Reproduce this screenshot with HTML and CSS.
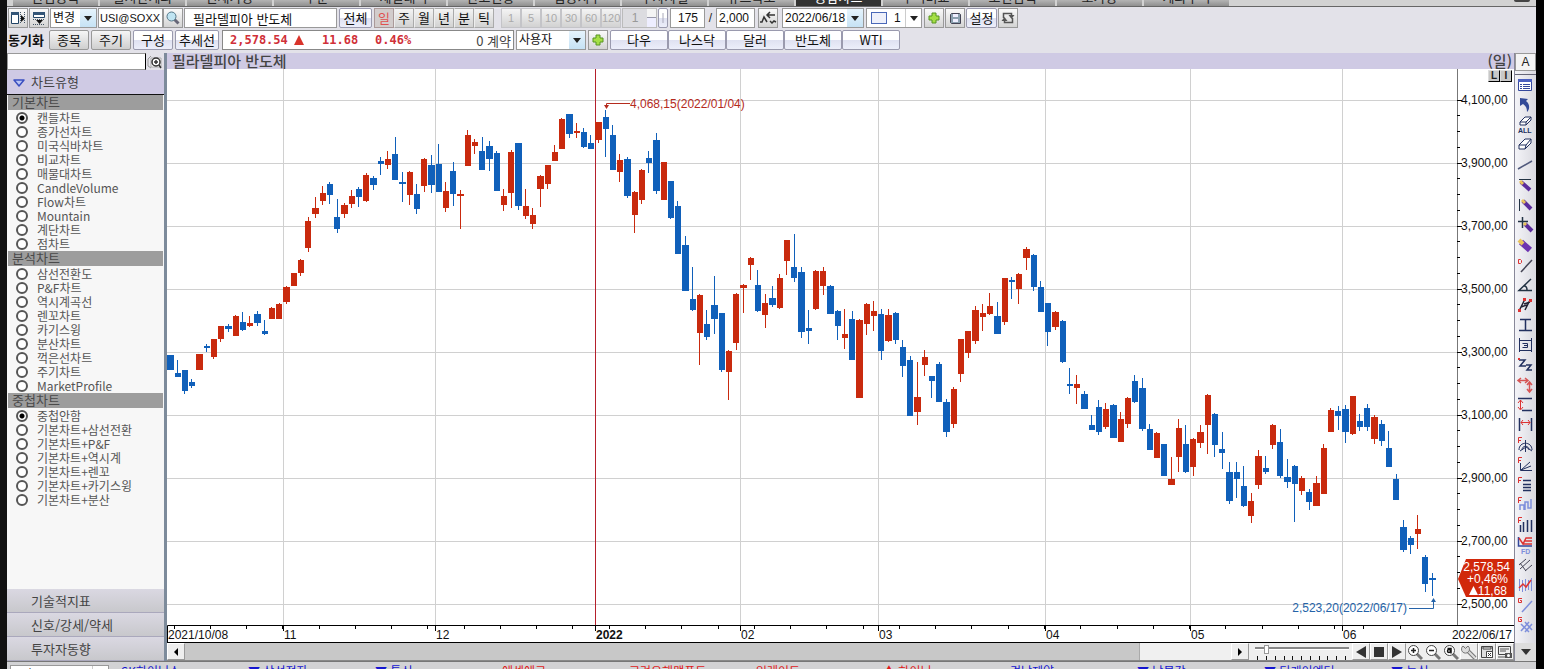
FILE: index.html
```html
<!DOCTYPE html>
<html lang="ko">
<head>
<meta charset="utf-8">
<title>필라델피아 반도체 차트</title>
<link rel="stylesheet" href="styles.css">
</head>
<body>
<div class="window">
  <nav class="tabs">
    <button>관심종목</button><button>실시간계좌</button><button>현재가창</button><button>주문</button><button>체결내역</button><button>잔고현황</button><button>업종지수</button><button>투자자별</button><button>뉴스속보</button><button class="on">종합차트</button><button>주식비교</button><button>조건검색</button><button>호가창</button><button>계좌수익</button>
    <span class="tabs-end"></span>
  </nav>

  <header class="toolbar">
    <div class="row">
      <button class="ico" aria-label="왼쪽 패널"><svg width="16" height="16"><path d="M1.500 2.500h7v11h-7z" fill="#fff" stroke="#246"/><path d="M1 2h8v3H1z" fill="#357"/><path d="M11 5v7l4-3.500z" fill="#111"/><path d="M10.500 2v12M14.500 2v12" stroke="#456" stroke-dasharray="1 1"/></svg></button>
      <button class="ico" aria-label="위쪽 패널"><svg width="16" height="16"><path d="M2.500 2.500h11v5h-11z" fill="#fff" stroke="#246"/><path d="M2 2h12v3H2z" fill="#357"/><path d="M5 10h7l-3.500 4z" fill="#111"/><path d="M2 9.500h12M2 14.500h12" stroke="#456" stroke-dasharray="1 1"/></svg></button>
      <span class="combo w47"><select aria-label="변경"><option>변경</option></select><i class="blue"></i></span>
      <input class="field w65 code" aria-label="종목코드" value="USI@SOXX">
      <button class="ico" aria-label="검색"><svg width="16" height="16"><path d="M9.500 9.500l4 4" stroke="#667" stroke-width="3"/><circle cx="6.500" cy="6.500" r="4.500" fill="#bfe4f2" stroke="#578"/></svg></button>
      <input class="field w153 name" aria-label="종목명" value="필라델피아 반도체">
      <button class="btn w33">전체</button>
      <div class="seg"><button class="on">일</button><button>주</button><button>월</button><button>년</button><button>분</button><button>틱</button></div>
      <div class="seg off"><button>1</button><button>5</button><button>10</button><button>30</button><button>60</button><button>120</button></div>
      <div class="spin"><input aria-label="간격" value="1" disabled><button aria-label="간격 조절"></button></div>
      <button class="btn w10" aria-label="구분"><svg width="4" height="12"><path d="M2 1v10" stroke="#aab"/></svg></button>
      <input class="field w35 right" aria-label="표시 개수" value="175">
      <span class="slash">/</span>
      <input class="field w39" aria-label="전체 개수" value="2,000">
      <button class="ico" aria-label="차트 이동"><svg width="18" height="16"><path d="M1 12h2l2-5 3 5M8 5h8M11 2L8 5l3 3M11 11l2 2 2-2 2 1" fill="none" stroke="#333" stroke-width="1.500"/></svg></button>
      <span class="combo w82 date"><select aria-label="날짜"><option>2022/06/18</option></select><i class="blue"></i></span>
      <span class="combo w56 swatch"><b></b><select aria-label="선 굵기"><option>1</option></select><i></i></span>
      <button class="ico" aria-label="추가"><svg width="14" height="14"><path d="M5 2h4v3h3v4H9v3H5V9H2V5h3z" fill="#a5df45" stroke="#579421"/></svg></button>
      <button class="ico" aria-label="저장"><svg width="14" height="14"><path d="M3.500 2.500h8l1 1v9h-9l-1-1v-8z" fill="#8ba0af" stroke="#445"/><path d="M5 3h5v3H5zM5 8h5v3H5z" fill="#eef"/></svg></button>
      <button class="btn w31">설정</button>
      <button class="ico" aria-label="새로고침"><svg width="16" height="16"><path d="M3.500 8V3.500h8V6M12.500 8v4.500h-8V10" fill="none" stroke="#555" stroke-width="1.500"/><path d="M8.500 5h6l-3 4zM1.500 11h6l-3-4z" fill="#555"/></svg></button>
    </div>
    <div class="row">
      <strong class="sync">동기화</strong>
      <button class="btn grey w40">종목</button>
      <button class="btn grey w40">주기</button>
      <button class="btn w40">구성</button>
      <button class="btn w44">추세선</button>
      <div class="quote"><b class="price">2,578.54</b><svg width="10" height="10"><path d="M5 0l5 10H0z" fill="#d9342b"/></svg><b class="diff">11.68</b><b class="rate">0.46%</b><span class="qty">0 계약</span></div>
      <span class="combo w70"><select aria-label="사용자"><option>사용자</option></select><i class="blue"></i></span>
      <button class="ico" aria-label="사용자 추가"><svg width="14" height="14"><path d="M5 2h4v3h3v4H9v3H5V9H2V5h3z" fill="#a5df45" stroke="#579421"/></svg></button>
      <div class="links"><button class="btn">다우</button><button class="btn">나스닥</button><button class="btn">달러</button><button class="btn">반도체</button><button class="btn">WTI</button></div>
    </div>
  </header>

  <main class="main">
    <aside class="side">
      <div class="find"><input aria-label="차트 검색"><button aria-label="찾기"><svg width="16" height="14"><path d="M4 1L1 4v7l3 2" fill="none" stroke="#999"/><path d="M4 3h10v9H4z" fill="#fff" stroke="#aaa"/><circle cx="9" cy="7" r="4" fill="#fff" stroke="#333" stroke-width="1.500"/><path d="M9 5v4M7 7h4M12 10l2 3" stroke="#333" stroke-width="1.500"/></svg></button></div>
      <button class="fold open"><svg width="12" height="9"><path d="M1 2h10L6 8z" fill="#b9c4f4" stroke="#3a4fc0" stroke-width="1.500" stroke-linejoin="round"/></svg>차트유형</button>
      <div class="lists">
        <h3>기본차트</h3>
        <div class="list">
          <label><input type="radio" name="type" checked>캔들차트</label>
          <label><input type="radio" name="type">종가선차트</label>
          <label><input type="radio" name="type">미국식바차트</label>
          <label><input type="radio" name="type">비교차트</label>
          <label><input type="radio" name="type">매물대차트</label>
          <label><input type="radio" name="type">CandleVolume</label>
          <label><input type="radio" name="type">Flow차트</label>
          <label><input type="radio" name="type">Mountain</label>
          <label><input type="radio" name="type">계단차트</label>
          <label><input type="radio" name="type">점차트</label>
        </div>
        <h3>분석차트</h3>
        <div class="list">
          <label><input type="radio" name="type">삼선전환도</label>
          <label><input type="radio" name="type">P&amp;F차트</label>
          <label><input type="radio" name="type">역시계곡선</label>
          <label><input type="radio" name="type">렌꼬차트</label>
          <label><input type="radio" name="type">카기스윙</label>
          <label><input type="radio" name="type">분산차트</label>
          <label><input type="radio" name="type">꺽은선차트</label>
          <label><input type="radio" name="type">주기차트</label>
          <label><input type="radio" name="type">MarketProfile</label>
        </div>
        <h3>중첩차트</h3>
        <div class="list">
          <label><input type="radio" name="over" checked>중첩안함</label>
          <label><input type="radio" name="over">기본차트+삼선전환</label>
          <label><input type="radio" name="over">기본차트+P&amp;F</label>
          <label><input type="radio" name="over">기본차트+역시계</label>
          <label><input type="radio" name="over">기본차트+렌꼬</label>
          <label><input type="radio" name="over">기본차트+카기스윙</label>
          <label><input type="radio" name="over">기본차트+분산</label>
        </div>
      </div>
      <button class="fold">기술적지표</button>
      <button class="fold">신호/강세/약세</button>
      <button class="fold">투자자동향</button>
    </aside>

    <section class="center">
      <div class="title"><h2>필라델피아 반도체</h2><span>(일)</span></div>
      <div class="plot">
        <div class="scale"><button>L</button><button>I</button></div>
        <svg class="chart" viewBox="167 69 1347 574">
          <path class="grid" d="M167 100.500H1457M167 163.500H1457M167 226.500H1457M167 289.500H1457M167 352.500H1457M167 415.500H1457M167 478.500H1457M167 541.500H1457M167 604.500H1457"/>
          <path class="grid" d="M283.500 69V625M435.500 69V625M740.500 69V625M878.500 69V625M1045.500 69V625M1190.500 69V625M1342.500 69V625"/>
          <rect class="year" x="595" y="69" width="1" height="556"/>
          <g id="candles" shape-rendering="crispEdges"></g>
          <path d="M1457.500 69V625" stroke="#777"/>
          <path id="ticks" fill="none" stroke="#000"/>
          <path d="M167.500 643V625.500H1514M167 642.500H1514" fill="none" stroke="#000"/>
          <g class="txt" id="prices"></g>
          <g class="txt">
            <text x="168" y="639">2021/10/08</text><text x="284" y="639">11</text><text x="436" y="639">12</text><text x="596" y="639" font-weight="700">2022</text><text x="741" y="639">02</text><text x="879" y="639">03</text><text x="1046" y="639">04</text><text x="1191" y="639">05</text><text x="1343" y="639">06</text><text x="1512" y="639" text-anchor="end">2022/06/17</text>
          </g>
          <g class="txt hi"><path d="M630 103.500H606.500V107" fill="none" stroke="#b52b1d"/><path d="M604 105h5l-2.500 4z"/><text x="630" y="108">4,068,15(2022/01/04)</text></g>
          <g class="txt lo"><path d="M1409 608.500H1433.500V601" fill="none" stroke="#2563a8"/><path d="M1431 602h5l-2.500-4z"/><text x="1407" y="612" text-anchor="end">2,523,20(2022/06/17)</text></g>
          <path d="M1458 579l8-20h48v38h-48z" fill="#d1280b"/>
          <g class="txt badge"><text x="1510" y="571" text-anchor="end">2,578,54</text><text x="1508" y="583" text-anchor="end">+0,46%</text><path d="M1469 595h9l-4.500-9z"/><text x="1507" y="595" text-anchor="end">11,68</text></g>
        </svg>
      </div>
      <div class="scroll">
        <button aria-label="왼쪽으로"><svg width="6" height="8"><path d="M5 0v8L1 4z"/></svg></button>
        <div class="track"><div class="thumb"></div><div class="rest"></div></div>
        <button aria-label="오른쪽으로"><svg width="6" height="8"><path d="M1 0v8l4-4z"/></svg></button>
        <div class="zoomer"><input type="range" aria-label="확대" min="0" max="10" value="1"><svg width="100" height="4" class="marks"><path d="M6.500 0v4M15.500 0v4M24.500 0v4M33.500 0v4M41.500 0v4M50.500 0v4M59.500 0v4M68.500 0v4M76.500 0v4M85.500 0v4M94.500 0v4" stroke="#111"/></svg></div>
        <button aria-label="이전"><svg width="12" height="12"><path d="M11 0v12L1 6z" fill="#333"/></svg></button>
        <button aria-label="정지"><svg width="12" height="12"><path d="M1 1h10v10H1z" fill="#333"/></svg></button>
        <button aria-label="다음"><svg width="12" height="12"><path d="M1 0v12l10-6z" fill="#333"/></svg></button>
        <button class="flat" aria-label="확대"><svg width="16" height="16"><path d="M10 10l5 5" stroke="#777" stroke-width="3"/><circle cx="6.500" cy="6.500" r="5" fill="#fff" stroke="#444"/><path d="M4 6.500h5M6.500 4v5" stroke="#222" stroke-width="1.500"/></svg></button>
        <button class="flat" aria-label="축소"><svg width="16" height="16"><path d="M10 10l5 5" stroke="#777" stroke-width="3"/><circle cx="6.500" cy="6.500" r="5" fill="#fff" stroke="#444"/><path d="M4 6.500h5" stroke="#222" stroke-width="1.500"/></svg></button>
        <button class="flat" aria-label="자동"><svg width="16" height="16"><path d="M10 10l5 5" stroke="#777" stroke-width="3"/><circle cx="6.500" cy="6.500" r="5" fill="#fff" stroke="#444"/><circle cx="6" cy="7" r="1.500" fill="none" stroke="#111" stroke-width="1.500"/><path d="M4.500 4.500h3.500v5" fill="none" stroke="#111" stroke-width="1.500"/></svg></button>
        <button aria-label="도구"><svg width="16" height="16"><path d="M6 6l8 8" stroke="#777" stroke-width="4"/><path d="M6 6l8 8" stroke="#ddd" stroke-width="2"/><path d="M2 2l2.500 2.500L7 2M2 2a4 4 0 1 0 5 0" fill="#ddd" stroke="#777"/></svg></button>
        <button aria-label="저장"><svg width="14" height="14"><path d="M1.500 1.500h11v11h-11z" fill="#ddd" stroke="#444"/><path d="M3 2h8v2H3zM6.500 6.500h6v6h-6z" fill="#fff" stroke="#444"/><path d="M8 8l3 3M11 8l-3 3" stroke="#333"/></svg></button>
        <button aria-label="화면 저장"><svg width="16" height="14"><path d="M1.500 1.500h12v8h-12z" fill="#eee" stroke="#444"/><path d="M3 4h9M3 6h6M1 12h7" stroke="#555"/><path d="M8 8h7v5H8z" fill="#555"/><circle cx="11.500" cy="10.500" r="1.500" fill="#fff"/></svg></button>
      </div>
    </section>

    <aside class="tools">
      <button class="alpha">A</button>
      <div class="icons">
        <button aria-label="목록"><svg viewBox="0 0 16 16"><path d="M1.500 2.500h13v11h-13z" fill="#fff" stroke="#34489c"/><path d="M1 2h14v3H1z" fill="#4a5fc0"/><path d="M3 7.500h2M6 7.500h7M3 9.500h2M6 9.500h7M3 11.500h2M6 11.500h7" stroke="#34489c"/></svg></button>
        <button aria-label="되돌리기"><svg viewBox="0 0 16 16"><path d="M3 1l8 1-2 2c4 3 4 8 1 11 0-4-1-6-4-8L3 9z" fill="#334a97"/></svg></button>
        <button aria-label="모두 지우기"><svg viewBox="0 0 16 16"><path d="M3 5l5-5h6L9 5zM3 5v3h6V5M9 8l5-5V0" fill="#fff" stroke="#22305f"/><text x="1" y="16" class="mini navy">ALL</text></svg></button>
        <button aria-label="지우기"><svg viewBox="0 0 16 16"><path d="M2 8l6-6h6L9 8zM2 8v4h6l1-4M8 12l6-6V2" fill="#fff" stroke="#22305f"/></svg></button>
        <button aria-label="추세선"><svg viewBox="0 0 16 16"><path d="M1 12L15 4" stroke="#50597c" stroke-width="1.500"/></svg></button>
        <button aria-label="수평선"><svg viewBox="0 0 16 16"><path d="M2 2.500h12" stroke="#234"/><path d="M4 5l9 8" stroke="#5b2c9c" stroke-width="4"/><path d="M3 4l3 3" stroke="#e8c35b" stroke-width="3"/></svg></button>
        <button aria-label="수직선"><svg viewBox="0 0 16 16"><path d="M2.500 2v12" stroke="#234"/><path d="M6 4l8 8" stroke="#5b2c9c" stroke-width="4"/><path d="M5 3l3 3" stroke="#e8c35b" stroke-width="3"/></svg></button>
        <button aria-label="십자선"><svg viewBox="0 0 16 16"><path d="M1 4.500h10M5.500 0v11" stroke="#234" stroke-width="1.500"/><path d="M8 7l7 7" stroke="#5b2c9c" stroke-width="4"/><path d="M7 6l2 2" stroke="#e8c35b" stroke-width="3"/></svg></button>
        <button aria-label="연필"><svg viewBox="0 0 16 16"><path d="M4 5l9 8" stroke="#6d33b0" stroke-width="6"/><path d="M2 3l4 4" stroke="#e8c35b" stroke-width="4"/></svg></button>
        <button aria-label="D선"><svg viewBox="0 0 16 16"><path d="M4 15L15 3" stroke="#445" stroke-width="1.500"/><path d="M1.500 2.500h2l1 1v2l-1 1h-2z" fill="none" stroke="#d33"/></svg></button>
        <button aria-label="각도"><svg viewBox="0 0 16 16"><path d="M14 2L2 13.500h13M7 9c2 0 3 2 3 4" fill="none" stroke="#234" stroke-width="1.500"/></svg></button>
        <button aria-label="평행선"><svg viewBox="0 0 16 16"><path d="M2 14L8 2M8 13l5-10M4 10l6-2M7 7l6-2" stroke="#223" stroke-width="1.500"/><path d="M1 12h3v3H1zM6 1h3v3H6zM12 2h3v3h-3z" fill="#d33"/></svg></button>
        <button aria-label="높이"><svg viewBox="0 0 16 16"><path d="M3 2.500h11M8.500 2v11M2 13.500h13" stroke="#22305f" stroke-width="1.500"/></svg></button>
        <button aria-label="사각형"><svg viewBox="0 0 16 16"><path d="M2.500 1v14M14.500 1v14M2 3.500h12M2 13.500h12M5.500 6.500h5v4h-5M7 8.500h3" fill="none" stroke="#22305f"/></svg></button>
        <button aria-label="지그재그"><svg viewBox="0 0 16 16"><path d="M2 3h6l-5 6h6M9 8h5l-4 5h5" fill="none" stroke="#22305f" stroke-width="1.500"/><path d="M1 1h2v2H1z" fill="#d33"/></svg></button>
        <button aria-label="가로세로"><svg viewBox="0 0 16 16"><path d="M1 3.500h9M12.500 6v9M4 1L1 3.500 4 6M8 1l3 2.500L8 6M10 8l2.500-3L15 8M10 12l2.500 3 2.500-3" fill="none" stroke="#d65454" stroke-width="1.500"/></svg></button>
        <button aria-label="세로 범위"><svg viewBox="0 0 16 16"><path d="M1 1.500h14M5 13.500h10" stroke="#22305f" stroke-width="1.500"/><path d="M3.500 3v9M1 6l2.500-3L6 6M1 10l2.500 3L6 10" fill="none" stroke="#d33"/></svg></button>
        <button aria-label="가로 범위"><svg viewBox="0 0 16 16"><path d="M2.500 1v13M14.500 1v13" stroke="#22305f" stroke-width="1.500"/><path d="M4 5.500h9M6 3L4 5.500 6 8M11 3l2 2.500L11 8" fill="none" stroke="#d33"/></svg></button>
        <button aria-label="피보나치 원"><svg viewBox="0 0 16 16"><path d="M8.500 3v12M2 13c0-9 13-9 13 0M5 13c0-5 7-5 7 0M3 14l6-4 6 4" fill="none" stroke="#22305f"/><path class="mark" d="M1.500 6V.500H5M1 3.500h3"/></svg></button>
        <button aria-label="피보나치 부채"><svg viewBox="0 0 16 16"><path d="M3.500 6v7.500H15M4 13l9-8M4 13l10-4" fill="none" stroke="#22305f"/><path class="mark" d="M1.500 6V.500H5M1 3.500h3"/></svg></button>
        <button aria-label="피보나치 조정"><svg viewBox="0 0 16 16"><path d="M6 3.500h8M6 7.500h8M6 10.500h8M6 13.500h8" stroke="#22305f" stroke-width="1.500"/><path class="mark" d="M1.500 6V.500H5M1 3.500h3"/></svg></button>
        <button aria-label="피보나치 목표"><svg viewBox="0 0 16 16"><path d="M3 13V8h4v5M8 13V5h3v6h3V2" fill="none" stroke="#7d8edb" stroke-width="1.500"/><path class="mark" d="M1.500 6V.500H5M1 3.500h3"/></svg></button>
        <button aria-label="피보나치 시간"><svg viewBox="0 0 16 16"><path d="M3.500 8v7M6.500 5v10M10.500 3v12M14.500 3v12" stroke="#22305f" stroke-width="1.500"/><path class="mark" d="M1.500 6V.500H5M1 3.500h3"/></svg></button>
        <button aria-label="FD"><svg viewBox="0 0 16 16"><path d="M1.500 0v9H15" fill="none" stroke="#34489c" stroke-width="1.500"/><path d="M2 1l4 6 3-6h6M8 4h7M6 7h9" fill="none" stroke="#d33" stroke-width="1.500"/><text x="4" y="17" class="mini sky">FD</text></svg></button>
        <button aria-label="피치포크"><svg viewBox="0 0 16 16"><path d="M2 8l7-6M3 12L13 3M8 14l7-6M3 6l6 8" stroke="#445"/></svg></button>
        <button aria-label="회귀선"><svg viewBox="0 0 16 16"><path d="M2.500 2v12M5.500 3v12M8.500 2v12M11.500 3v10M14.500 1v13" stroke="#7d8edb"/><path d="M2 11l4-4 3 3 5-7" fill="none" stroke="#d33" stroke-width="1.500"/></svg></button>
        <button aria-label="갠선"><svg viewBox="0 0 16 16"><path d="M5 15L15 4" stroke="#7d8edb" stroke-width="1.500"/><path class="mark" d="M5 1.500H1.500v4h3v-2H3"/></svg></button>
        <button aria-label="갠격자"><svg viewBox="0 0 16 16"><path d="M4 14L12 5M8 15l7-8M4 7l8 8M8 5l7 8" stroke="#7d8edb" stroke-width="1.500"/><path class="mark" d="M5 .500H1.500v4h3v-2H3"/></svg></button>
      </div>
      <button class="more" aria-label="더보기"><svg width="10" height="6"><path d="M0 0h10L5 6z" fill="#333"/></svg></button>
    </aside>
  </main>

  <footer class="ticker">
    <span class="combo"><select aria-label="관심그룹"><option>업종종목</option></select><i></i></span>
    <a href="#">SK하이닉스</a><a href="#">▼ 삼성전자</a><a href="#">▼ 통신</a><a href="#" class="up">에센에코</a><a href="#" class="up">고려유해맥푸드</a><a href="#" class="up">일레이트</a><a href="#" class="up">▲ 하이닉</a><a href="#">경남제약</a><a href="#">▼ 남물감</a><a href="#">▼ 티케이엔터</a><a href="#">▼ 농심</a>
  </footer>
</div>
<script src="script.js"></script>
</body>
</html>
```
FILE: styles.css
```css
* { box-sizing: border-box; }
body { margin: 0; background: #000; font: 13px/14px "Noto Sans CJK KR", "Noto Sans", sans-serif; color: #222; }
button, input, select { font: inherit; color: inherit; margin: 0; padding: 0; border: 0; border-radius: 0; background: none; }
h2, h3 { margin: 0; }
svg { display: block; flex: none; }
.window { display: flex; flex-direction: column; height: 100vh; overflow: hidden; background: #e3e2e9; border-left: 7px solid #111; border-right: 8px solid #000; }

.tabs { display: flex; gap: 2px; height: 7px; padding-left: 6px; overflow: hidden; background: #d2d2d2; border-bottom: 1px solid #666; }
.tabs button { width: 85px; height: 6px; line-height: 18px; display: flex; align-items: flex-end; justify-content: center; background: linear-gradient(#b4b4b4, #8f8f8f); color: #222; }
.tabs button.on { background: #333; color: #fff; }
.tabs-end { margin-left: auto; margin-right: 6px; width: 16px; height: 2px; background: #444; border-radius: 0 0 4px 4px; }

.toolbar { padding: 1px 1px 3px; display: flex; flex-direction: column; gap: 2px; flex: none; }
.row { display: flex; gap: 1px; height: 20px; }
.row > * { flex: none; height: 20px; }
.ico { width: 20px; display: flex; align-items: center; justify-content: center; border: 1px solid #999; background: linear-gradient(#fafafa, #d4d4d4); }
.btn { border: 1px solid #9a9aae; border-radius: 2px; background: linear-gradient(#fff 50%, #dfe1f1 50%, #eceefa); text-align: center; white-space: nowrap; color: #111; }
.btn.grey { background: linear-gradient(#f6f6f6, #cfcfcf); border-color: #999; }
.field { border: 1px solid #999; background: #fff; padding: 0 2px; color: #111; }
.field, .combo, .spin, .slash { font-family: "Liberation Sans", "Noto Sans CJK KR", sans-serif; font-size: 12px; }
.name { padding-left: 8px; font-size: 13px; }
.code { margin-right: -1px; padding: 0 1px; font-size: 11px; }
.right { text-align: right; padding-right: 6px; }
.combo { display: flex; border: 1px solid #999; background: #fff; color: #111; }
.combo select { appearance: none; flex: 1; min-width: 0; height: 18px; padding-left: 2px; outline: none; line-height: 18px; }
.combo i { width: 16px; display: flex; align-items: center; justify-content: center; border-left: 1px solid #ccc; }
.combo i.blue { background: linear-gradient(#e6f4fd, #c6e2f4); border: 0; }
.combo i::after { content: ""; border: 4px solid transparent; border-top: 5px solid #222; border-bottom: 0; }
.w10 { width: 10px; padding: 0 2px; } .w31 { width: 31px; } .w33 { width: 33px; margin: 0 1px; }
.w35 { width: 35px; margin-left: 1px; } .w39 { width: 39px; margin-right: 2px; } .w40 { width: 40px; margin-right: 1px; }
.w44 { width: 44px; margin-right: 2px; } .w47 { width: 47px; } .w56 { width: 56px; margin: 0 1px; } .w65 { width: 65px; }
.w70 { width: 70px; margin: 0 1px; } .w82 { width: 82px; margin-left: 3px; } .w153 { width: 153px; }
.slash { width: 9px; line-height: 20px; text-align: center; }
.swatch b { width: 16px; height: 12px; margin: 3px 5px 0 4px; border: 1px solid #4a68b8; background: #eef0fa; }
.seg { display: flex; }
.seg button { width: 20px; border: 1px solid #aaa; border-left-color: #eee; background: linear-gradient(#f4f4f4, #d2d2d2); color: #111; }
.seg .on { background: #d2cccc; color: #e05050; border-color: #a99; }
.seg.off { margin-left: 6px; }
.seg.off button { font: 11px "Liberation Sans", sans-serif; color: #aaa; border-color: #c4c4c8; }
.spin { display: flex; width: 35px; border: 1px solid #bbb; }
.spin input { width: 24px; text-align: center; color: #999; background: #dcdce0; }
.spin button { flex: 1; background: linear-gradient(#f4f4f4 45%, #99a 45% 50%, #eef 50%); }
.sync { width: 40px; line-height: 20px; white-space: nowrap; color: #111; }
.quote { width: 292px; display: flex; align-items: center; padding: 0 2px 0 7px; border: 1px solid #888; background: #fff; color: #d03038; font: 12px "DejaVu Sans Mono", monospace; }
.price { width: 64px; } .diff { width: 53px; margin-left: 18px; } .qty { margin-left: auto; font: 13px "Noto Sans CJK KR", sans-serif; color: #444; }
.links { display: flex; margin-left: 1px; }
.links .btn { width: 58px; }

.main { flex: 1; min-height: 0; display: flex; }
.side { width: 160px; flex: none; display: flex; flex-direction: column; background: #f7f7f7; border-right: 3px solid #7d8b9b; }
.find { display: flex; height: 17px; background: #e3e2e9; }
.find input { width: 139px; background: #fff; border: 1px solid #999; border-right-color: #000; }
.find button { flex: 1; padding-left: 1px; }
.fold { height: 24px; flex: none; padding-left: 24px; display: flex; align-items: center; background: linear-gradient(#dad8e2, #c8c8cc); border-bottom: 1px solid #aaa8bc; color: #444; }
.fold.open { height: 25px; padding-left: 6px; gap: 6px; background: #cfcae4; border-color: #111; }
.lists { flex: 1; min-height: 0; overflow: hidden; font-size: 12px; color: #555; }
.lists h3 { height: 15px; margin: 0 1px 1px; padding-left: 4px; font-size: 13px; font-weight: 400; line-height: 13px; background: #9d9d9d; color: #4a4a4a; }
.list { display: flex; flex-direction: column; }
.list label { height: 14px; padding-left: 9px; display: flex; align-items: center; gap: 9px; line-height: 12px; }
.list input { appearance: none; width: 12px; height: 12px; border: 2px solid #555; border-radius: 50%; background: #fff; }
.list input:checked { background: radial-gradient(circle, #000 2px, #fff 3px); }

.center { flex: 1; min-width: 0; display: flex; flex-direction: column; }
.title { height: 16px; flex: none; display: flex; justify-content: space-between; align-items: center; padding: 0 2px 0 5px; background: #cfcae4; color: #444; font-size: 15px; font-weight: 500; }
.title h2 { font-size: 15px; font-weight: 500; }
.plot { flex: 1; min-height: 0; position: relative; background: #fff; }
.scale { position: absolute; right: 2px; top: 1px; display: flex; }
.scale button { width: 12px; height: 12px; border: 1px solid #000; border-top-color: #ddd; border-left-color: #ddd; background: #c8c8c8; font: bold 10px/10px "Liberation Sans", sans-serif; }
.chart { width: 100%; height: 100%; }
.grid { fill: none; stroke: #d0d0d0; }
.year { fill: #b5202c; }
.txt { font: 12px "Liberation Sans", sans-serif; fill: #111; }
.hi { fill: #b52b1d; } .lo { fill: #2563a8; } .badge { fill: #fff; }
.up-bar { fill: #c92a0e; } .down-bar { fill: #1060ba; }
.scroll { height: 18px; flex: none; display: flex; background: #efefef; border-bottom: 1px solid #888; }
.scroll > button { width: 18px; display: flex; align-items: center; justify-content: center; border: 1px solid #999; border-top-color: #fff; border-left-color: #fff; background: #eee; }
.scroll > button.flat { border-color: #eee; }
.track { flex: 1; display: flex; background: #f0f0f0; }
.thumb { flex: 21; background: #c8c8c8; border-right: 1px solid #aaa; }
.rest { flex: 2; }
.zoomer { width: 103px; padding: 2px 1px 0 2px; }
.zoomer input { appearance: none; display: block; width: 94px; height: 9px; margin-left: 4px; background: linear-gradient(transparent 2px, #888 2px 4px, #fff 4px 5px, transparent 5px); }
.zoomer input::-webkit-slider-thumb { appearance: none; width: 5px; height: 9px; border: 1px solid #999; background: #fff; }
.marks { margin-top: 2px; }

.tools { width: 22px; flex: none; display: flex; flex-direction: column; background: linear-gradient(90deg, #f4f4f8, #dadae0); border-left: 1px solid #889; }
.alpha { height: 18px; margin-bottom: 3px; border: 1px solid #999; background: #f4f4f4; font: 12px "Liberation Sans", sans-serif; }
.icons { flex: 1; min-height: 0; display: flex; flex-direction: column; border-top: 1px solid #667; }
.icons button { height: 20px; flex: none; padding: 0 0 0 2px; }
.icons svg { width: 16px; height: 16px; fill: none; overflow: visible; }
.mark { stroke: #d33; stroke-width: 1; }
.mini { font: bold 7px "Liberation Sans", sans-serif; }
.navy { fill: #22305f; } .sky { fill: #7d8edb; }
.more { height: 18px; display: flex; align-items: center; justify-content: center; background: #ddd; }

.ticker { height: 8px; flex: none; overflow: hidden; display: flex; align-items: flex-start; padding: 3px 0 0 3px; background: #d2d2d4; border-top: 1px solid #777; font-size: 12px; }
.ticker .combo { width: 99px; height: 20px; margin-right: 12px; padding-left: 8px; }
.ticker a { width: 127px; flex: none; color: #1414d0; text-decoration: none; line-height: 12px; }
.ticker a.up { color: #e01818; }
```
FILE: script.js
```js
// One entry per session: direction, high, body top, body bottom, low (chart units).
const sessions = `
b355,355,370,370 b360,373,377,377 b370,370,391,394 b379,382,386,388 r354,354,370,370 b344,346,348,352 r339,339,357,359 r326,326,339,342 b324,326,329,332 r315,316,336,336
b312,322,330,331 r316,323,326,327 b311,314,323,326 b320,331,334,335 r307,308,319,319 r303,304,319,319 r286,287,302,304 r273,273,286,286 r259,260,273,276 r217,221,248,252
r197,208,214,218 r186,193,201,205 b182,184,195,204 b199,217,229,233 r203,205,214,218 r190,196,204,208 b187,189,197,207 r173,175,201,202 b176,178,185,190 b157,161,164,175
r151,159,165,169 b137,154,180,180 b172,182,184,202 r171,172,195,205 b184,194,209,214 r158,159,186,192 b155,165,185,193 b144,164,192,192 r182,191,208,212 b162,171,194,206
r190,194,196,229 r130,135,166,166 r139,142,146,154 b137,151,170,170 b141,146,159,171 b151,153,191,191 r189,196,205,211 r150,152,193,208 b143,143,206,210 r189,206,216,219
r208,215,224,229 r175,176,189,207 r165,165,184,189 r145,152,161,161 r118,119,149,149 b114,114,134,138 r123,131,133,138 b128,132,147,148 b135,143,149,149 r122,122,140,143
b110,117,129,157 b125,135,170,170 r154,160,172,182 b157,159,196,198 r191,192,215,233 r169,170,200,204 b151,158,163,173 b133,140,191,194 r162,162,200,200 b181,181,218,219
b201,206,254,254 b236,245,291,291 b267,299,310,311 r294,295,333,365 b310,324,337,340 b276,305,319,334 b313,313,370,372 r350,351,372,400 r293,294,343,350 r284,285,288,313
r257,258,265,280 b270,285,311,312 r294,303,315,328 b286,298,305,307 r274,278,308,309 r240,240,261,275 b234,267,278,282 b267,272,332,338 b310,328,331,344 r270,271,309,310
r267,271,286,295 b285,286,314,314 b310,311,326,340 r309,334,338,349 b311,319,360,360 r319,320,398,398 r303,304,324,335 r301,311,316,331 b309,314,351,360 r309,315,341,342
b312,313,340,344 b340,347,366,377 b356,360,416,416 r362,397,412,425 r350,357,365,376 b376,376,381,398 b362,364,402,402 b399,402,432,437 r387,389,424,428 r339,339,374,382
r331,331,353,358 r306,310,341,344 r304,313,317,331 r293,306,314,315 b302,316,334,334 r278,278,322,325 b277,280,282,299 r273,274,289,304 r247,249,258,270 b254,255,287,291
b281,287,312,312 b303,303,332,346 r311,312,327,330 b320,321,362,363 b368,384,386,394 r375,384,388,404 b391,394,409,409 b415,425,430,430 b400,407,432,435 r403,409,427,429
b404,405,438,438 r412,419,442,442 r397,398,424,428 b375,381,402,403 b378,388,429,431 b424,429,450,450 r432,433,458,458 b444,444,476,476 r457,479,485,485 r419,428,457,472
b425,444,472,473 r438,439,467,476 r425,432,443,448 r394,395,425,454 b413,414,445,457 b432,449,453,469 b462,472,501,504 b462,472,479,498 b466,486,506,507 r493,501,516,523
r450,456,485,489 b456,468,472,474 r424,425,445,449 b429,442,476,478 b459,477,482,488 b465,466,484,522 r476,478,491,495 b489,492,502,510 r476,483,506,506 r444,448,494,494
r408,410,432,432 b406,411,416,430 b405,409,432,443 r396,396,434,435 b414,421,427,431 b404,408,427,431 r415,417,439,444 b420,424,441,446 b431,448,467,467 b474,479,500,500
b520,527,550,552 b536,538,545,554 r515,529,534,549 b555,557,584,592 b573,578,580,596`.trim().split(/\s+/);

const FIRST = 170.5, STEP = 7.254;
const left = i => Math.round(FIRST + STEP * i - 3.2);
const rect = (cls, x, y, w, h) => `<rect class="${cls}" x="${x}" y="${y}" width="${w}" height="${h}"/>`;

document.getElementById("candles").innerHTML = sessions.map((s, i) => {
  const cls = s[0] === "r" ? "up-bar" : "down-bar";
  const [hi, top, bottom, lo] = s.slice(1).split(",").map(Number);
  const wick = Math.floor(FIRST + STEP * i - 0.3);
  return rect(cls, wick, hi, 1, lo - hi) + rect(cls, left(i), top, left(i + 1) - left(i) - 1, bottom - top);
}).join("");

let ticks = "", prices = "";
for (let k = 0; k <= 32; k++) {
  const y = Math.floor(100 + k * 15.75) + 0.5;
  ticks += `M1457 ${y}h${k % 4 ? 3 : 5}`;
}
for (let k = 0; k < 9; k++) {
  const hundreds = 41 - 2 * k;
  prices += `<text x="1461" y="${104 + 63 * k}">${Math.floor(hundreds / 10)},${hundreds % 10}00,00</text>`;
}
for (let k = 0; k < 35; k++) {
  ticks += `M${Math.floor(174 + k * 36.27) - (k > 32 ? 7 : 0) + 0.5} 625v4`;
}
for (const x of [283, 435, 595, 740, 878, 1045, 1190, 1342]) ticks += `M${x}.5 625v6`;
document.getElementById("ticks").setAttribute("d", ticks);
document.getElementById("prices").innerHTML = prices;
```
